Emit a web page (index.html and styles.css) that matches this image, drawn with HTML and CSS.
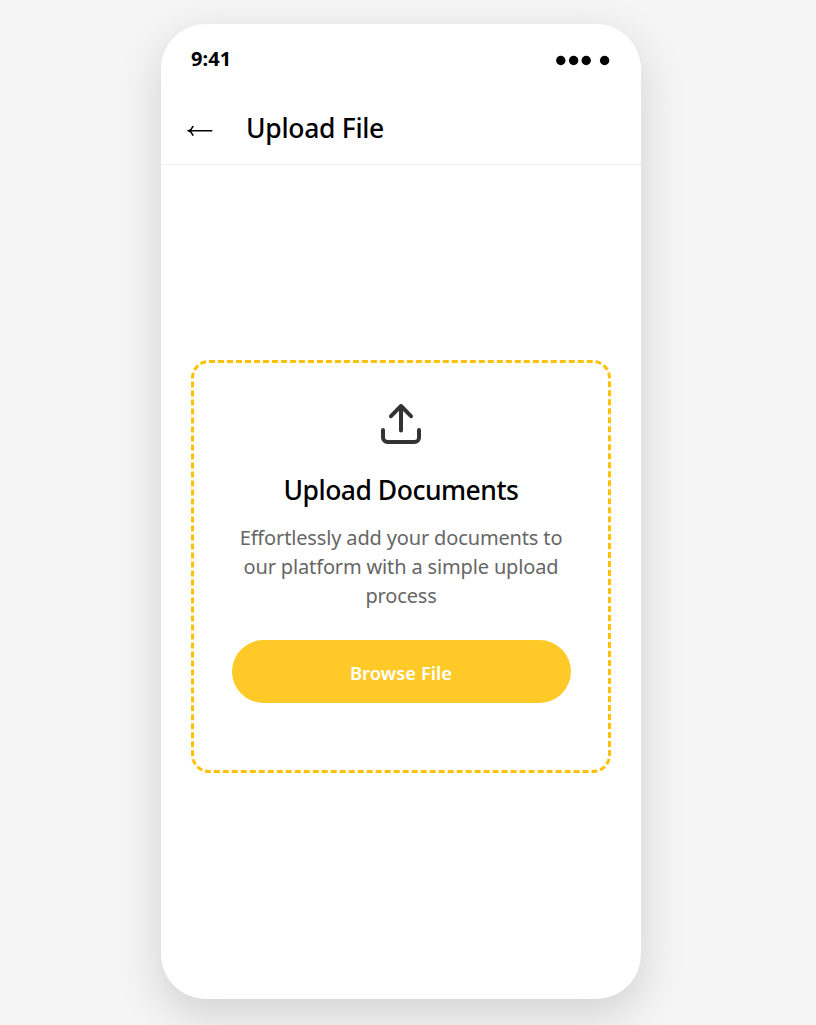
FILE: index.html
```html
<!DOCTYPE html>
<html lang="en">
<head>
<meta charset="utf-8">
<title>Upload File</title>
<link rel="stylesheet" href="styles.css">
</head>
<body>
<main class="phone">
  <div class="status-bar">
    <span class="time">9:41</span>
    <svg class="status-dots" viewBox="0 0 54 12" aria-hidden="true">
      <circle cx="3.8" cy="5.5" r="4.7"/><circle cx="16.6" cy="5.5" r="4.7"/><circle cx="29.2" cy="5.5" r="4.7"/><circle cx="47.6" cy="5.5" r="4.7"/>
    </svg>
  </div>
  <header class="header">
    <svg class="back" viewBox="0 0 26 14" aria-hidden="true"><path d="M25.3 6.8H2.5M6.2 2C5.2 4.4 3.9 6 1.6 6.8C3.9 7.6 5.2 9.2 6.2 11.6"/></svg>
    <h1 class="title">Upload File</h1>
  </header>
  <section class="content">
    <div class="dropzone">
      <svg class="upload-icon" viewBox="0 0 48 48" aria-hidden="true"><path d="M6 30v7.5a4.5 4.5 0 0 0 4.5 4.5h27a4.5 4.5 0 0 0 4.5-4.5V30M14 16.2 24 6l10 10.2M24 6v24.5"/></svg>
      <h2 class="heading">Upload Documents</h2>
      <p class="description">Effortlessly add your documents to<br>our platform with a simple upload<br>process</p>
      <button class="browse">Browse File</button>
    </div>
  </section>
</main>
</body>
</html>
```
FILE: styles.css
```css
* { box-sizing: border-box; }
body {
  margin: 0;
  height: 1025px;
  padding: 24px 0 0 161px;
  overflow: hidden;
  background: #f5f5f5;
  color: #000;
  font-family: "Noto Sans", "Open Sans", sans-serif;
}
.phone {
  display: flex;
  flex-direction: column;
  width: 480px;
  height: 975px;
  border-radius: 45px;
  background: #fff;
  box-shadow: 0 15px 45px rgba(0, 0, 0, 0.15);
}
.status-bar {
  display: flex;
  justify-content: space-between;
  align-items: center;
  height: 70px;
  padding: 0 30px;
}
.time { margin-top: -2px; font-size: 20px; font-weight: 700; letter-spacing: 0.1px; }
.status-dots { width: 54px; height: 12px; margin-top: 3px; overflow: visible; }
.header {
  display: flex;
  align-items: center;
  height: 71px;
  padding: 0 25px;
  border-bottom: 1px solid #f2f2f2;
}
.back {
  width: 26px;
  height: 14px;
  margin: 3px 33px 0 1px;
  fill: none;
  stroke: #000;
  stroke-width: 1.6;
}
.title { margin: -2px 0 0; font-size: 26.5px; line-height: 36px; font-weight: 500; letter-spacing: -0.3px; }
.content {
  display: flex;
  flex: 1;
  align-items: center;
  padding: 0 30px 31px;
}
.dropzone {
  display: flex;
  flex-direction: column;
  align-items: center;
  width: 420px;
  height: 413px;
  padding: 37px;
  border: 3px dashed #ffc107;
  border-radius: 18px;
}
.upload-icon {
  width: 48px;
  height: 48px;
  fill: none;
  stroke: #333;
  stroke-width: 4;
  stroke-linecap: round;
  stroke-linejoin: round;
}
.heading { margin: 24px 0 0; font-size: 26.5px; line-height: 36px; font-weight: 500; letter-spacing: -0.5px; white-space: nowrap; }
.description {
  margin: 15px 0 0;
  color: #666;
  font-size: 20px;
  line-height: 29px;
  letter-spacing: -0.15px;
  text-align: center;
  white-space: nowrap;
}
.browse {
  width: 339px;
  height: 63px;
  margin-top: 30px;
  padding: 2px 0 0;
  border: 0;
  border-radius: 32px;
  background: #ffca28;
  color: #fff;
  font: 600 18.5px "Noto Sans", "Open Sans", sans-serif;
}
```
